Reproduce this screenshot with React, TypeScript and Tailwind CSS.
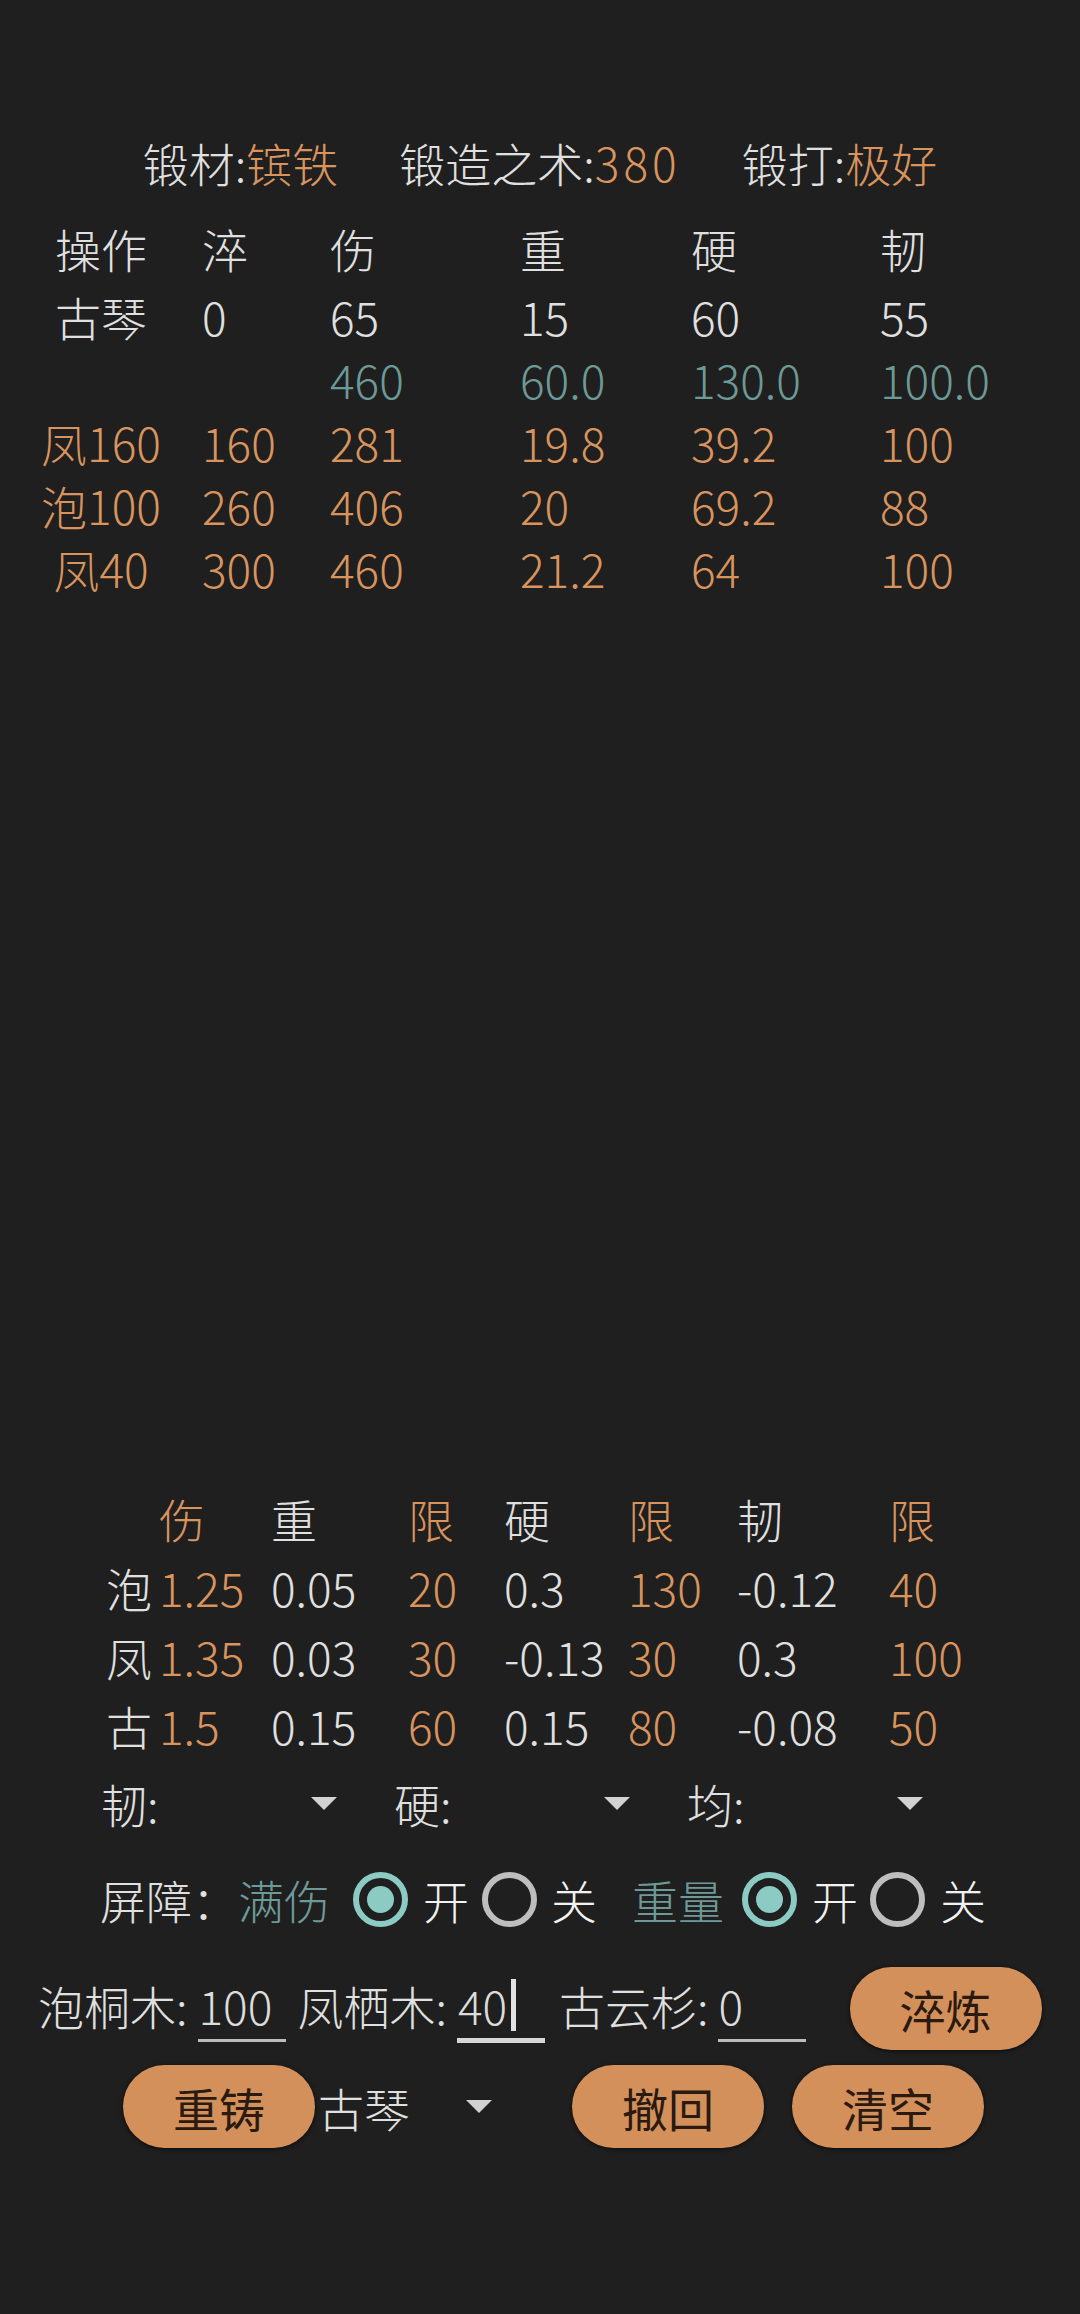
const LIGHT = "text-[#e0e0e0]";
const ORANGE = "text-[#d9945e]";
const TEAL = "text-[#6d9a97]";

const statRows = [
  { tone: LIGHT, cells: ["古琴", "0", "65", "15", "60", "55"] },
  { tone: TEAL, cells: ["", "", "460", "60.0", "130.0", "100.0"] },
  { tone: ORANGE, cells: ["凤160", "160", "281", "19.8", "39.2", "100"] },
  { tone: ORANGE, cells: ["泡100", "260", "406", "20", "69.2", "88"] },
  { tone: ORANGE, cells: ["凤40", "300", "460", "21.2", "64", "100"] },
];

const woodRows = [
  ["泡", "1.25", "0.05", "20", "0.3", "130", "-0.12", "40"],
  ["凤", "1.35", "0.03", "30", "-0.13", "30", "0.3", "100"],
  ["古", "1.5", "0.15", "60", "0.15", "80", "-0.08", "50"],
];

function Caret() {
  return (
    <svg width="26" height="13" viewBox="0 0 26 13" aria-hidden="true">
      <polygon points="0,0 26,0 13,13" fill="#d2d2d2" />
    </svg>
  );
}

function Radio({ checked }: { checked: boolean }) {
  return checked ? (
    <div className="flex h-[55px] w-[55px] shrink-0 items-center justify-center rounded-full border-[6px] border-[#8ccac4]">
      <div className="h-[27px] w-[27px] rounded-full bg-[#8ccac4]" />
    </div>
  ) : (
    <div className="h-[55px] w-[55px] shrink-0 rounded-full border-[6px] border-[#bebebe]" />
  );
}

function Pill({ label }: { label: string }) {
  return (
    <button
      type="button"
      className="flex h-[83px] w-[192px] shrink-0 items-center justify-center rounded-full bg-[#d4905b] font-normal text-[#2a1a10] shadow-[0_1px_4px_rgba(0,0,0,0.7)]"
    >
      {label}
    </button>
  );
}

function Field({ value, focused = false }: { value: string; focused?: boolean }) {
  return (
    <div className="flex h-[84px] w-[88px] shrink-0 flex-col pt-[15px]">
      <div className="flex h-[46px] items-center pl-[1px] leading-[46px] text-[#dcdcdc]">
        {value}
        {focused && <div className="ml-[4px] h-[52px] w-[5px] bg-[#e2e2e2]" />}
      </div>
      {focused ? (
        <div className="mt-[10px] h-[5px] bg-[#d6d6d6]" />
      ) : (
        <div className="mt-[11px] h-[3px] bg-[#bcbcbc]" />
      )}
    </div>
  );
}

function Spinner({ label }: { label: string }) {
  return (
    <div className="flex w-[293px] items-center">
      <span className={LIGHT}>{label}</span>
      <div className="ml-auto mr-[57px]">
        <Caret />
      </div>
    </div>
  );
}

export default function App() {
  return (
    <div className="min-h-[2314px] w-[1080px] bg-[#1f1f1f] pt-[130px] font-['Noto_Sans_CJK_SC','Noto_Sans',sans-serif] text-[46px] font-light leading-[46px]">
      {/* material header */}
      <div className="flex h-[64px] items-center justify-center gap-[61px]">
        <span className={LIGHT}>
          锻材:<span className={ORANGE}>镔铁</span>
        </span>
        <span className={LIGHT}>
          锻造之术:<span className={`tracking-[4px] ${ORANGE}`}>380</span>
        </span>
        <span className={LIGHT}>
          锻打:<span className={ORANGE}>极好</span>
        </span>
      </div>

      {/* forging steps */}
      <div className="mt-[22px]">
        <div className="mb-[4px] grid h-[64px] grid-cols-[202px_128px_190px_171px_189px_1fr] items-center text-[#e0e0e0]">
          <span className="text-center">操作</span>
          <span>淬</span>
          <span>伤</span>
          <span>重</span>
          <span>硬</span>
          <span>韧</span>
        </div>
        {statRows.map((row, i) => (
          <div
            key={i}
            className={`grid h-[63px] grid-cols-[202px_128px_190px_171px_189px_1fr] items-center ${row.tone}`}
          >
            {row.cells.map((c, j) => (
              <span key={j} className={j === 0 ? "text-center" : ""}>
                {c}
              </span>
            ))}
          </div>
        ))}
      </div>

      {/* wood coefficients */}
      <div className="mt-[884px] pl-[106px]">
        <div className="grid h-[69px] grid-cols-[53px_112px_137px_96px_124px_109px_152px_1fr] items-center">
          <span />
          <span className={ORANGE}>伤</span>
          <span className={LIGHT}>重</span>
          <span className={ORANGE}>限</span>
          <span className={LIGHT}>硬</span>
          <span className={ORANGE}>限</span>
          <span className={LIGHT}>韧</span>
          <span className={ORANGE}>限</span>
        </div>
        {woodRows.map((row, i) => (
          <div
            key={i}
            className="grid h-[69px] grid-cols-[53px_112px_137px_96px_124px_109px_152px_1fr] items-center"
          >
            {row.map((c, j) => (
              <span key={j} className={j % 2 === 1 ? ORANGE : LIGHT}>
                {c}
              </span>
            ))}
          </div>
        ))}
      </div>

      {/* spinners */}
      <div className="mt-[12px] flex h-[64px] items-center pl-[101px]">
        <Spinner label="韧:" />
        <Spinner label="硬:" />
        <Spinner label="均:" />
      </div>

      {/* barrier toggles */}
      <div className="mt-[32px] flex h-[64px] items-center pl-[100px]">
        <span className={LIGHT}>
          屏障：<span className={TEAL}>满伤</span>
        </span>
        <div className="ml-[23px]">
          <Radio checked />
        </div>
        <span className="ml-[15px] text-[#f2f2f2]">开</span>
        <div className="ml-[13px]">
          <Radio checked={false} />
        </div>
        <span className="ml-[14px] text-[#f2f2f2]">关</span>
        <span className={`ml-[35px] ${TEAL}`}>重量</span>
        <div className="ml-[18px]">
          <Radio checked />
        </div>
        <span className="ml-[15px] text-[#f2f2f2]">开</span>
        <div className="ml-[12px]">
          <Radio checked={false} />
        </div>
        <span className="ml-[15px] text-[#f2f2f2]">关</span>
      </div>

      {/* wood amounts */}
      <div className="mt-[36px] flex h-[84px] items-start pl-[38px]">
        <span className={`mt-[15px] ${LIGHT}`}>泡桐木:</span>
        <div className="ml-[10px]">
          <Field value="100" />
        </div>
        <span className={`ml-[12px] mt-[15px] ${LIGHT}`}>凤栖木:</span>
        <div className="ml-[10px]">
          <Field value="40" focused />
        </div>
        <span className={`ml-[14px] mt-[15px] ${LIGHT}`}>古云杉:</span>
        <div className="ml-[9px]">
          <Field value="0" />
        </div>
        <div className="ml-[44px]">
          <Pill label="淬炼" />
        </div>
      </div>

      {/* actions */}
      <div className="mt-[14px] flex h-[83px] items-center pl-[123px]">
        <Pill label="重铸" />
        <span className="ml-[3px] text-[#e0e0e0]">古琴</span>
        <div className="ml-[56px]">
          <Caret />
        </div>
        <div className="ml-[80px]">
          <Pill label="撤回" />
        </div>
        <div className="ml-[28px]">
          <Pill label="清空" />
        </div>
      </div>
    </div>
  );
}
